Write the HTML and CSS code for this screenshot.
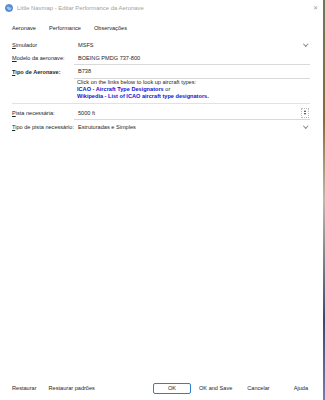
FILE: index.html
```html
<!DOCTYPE html>
<html>
<head>
<meta charset="utf-8">
<link rel="stylesheet" href="styles.css">
</head>
<body>
<div class="window">
  <div class="titlebar">
    <svg class="appicon" width="8" height="8" viewBox="0 0 8 8">
      <circle cx="4" cy="4" r="3.6" fill="#5b8fd6"/>
      <path d="M1.5 3.2 Q3 2 4.2 3 T6.8 3.4 L6 5.6 Q4.5 6.6 3 5.8 Z" fill="#9cc3ee"/>
      <circle cx="4" cy="4" r="3.6" fill="none" stroke="#3a6db5" stroke-width="0.6"/>
    </svg>
    <span class="title">Little Navmap - Editar Performance da Aeronave</span>
    <span class="close">✕</span>
  </div>
  <div class="tabs">
    <span class="tab">Aeronave</span>
    <span class="tab">Performance</span>
    <span class="tab">Observações</span>
  </div>
  <div class="form">
    <div class="row">
      <span class="label"><u>S</u>imulador</span>
      <div class="field combo"><span>MSFS</span><span class="chev"></span></div>
    </div>
    <div class="row">
      <span class="label"><u>M</u>odelo da aeronave:</span>
      <div class="field edit"><span>BOEING PMDG 737-800</span></div>
    </div>
    <div class="row">
      <span class="label bold"><u>T</u>ipo de Aeronave:</span>
      <div class="field edit"><span>B738</span></div>
    </div>
    <div class="help">
      <div>Click on the links below to look up aircraft types:</div>
      <div><span class="link">ICAO - Aircraft Type Designators</span> or</div>
      <div><span class="link">Wikipedia - List of ICAO aircraft type designators.</span></div>
    </div>
    <div class="sep"></div>
    <div class="row">
      <span class="label"><u>P</u>ista necessária:</span>
      <div class="field edit spin"><span>5000 ft</span><span class="spinbtn"><i class="up"></i><i class="down"></i></span></div>
    </div>
    <div class="row">
      <span class="label"><u>T</u>ipo de pista necessário:</span>
      <div class="field combo"><span>Estruturadas e Simples</span><span class="chev"></span></div>
    </div>
  </div>
  <div class="spacer"></div>
  <div class="buttons">
    <span class="btn">Restaurar</span>
    <span class="btn">Restaurar padrões</span>
    <span class="grow"></span>
    <span class="btn ok">OK</span>
    <span class="btn">OK and Save</span>
    <span class="btn">Cancelar</span>
    <span class="btn">Ajuda</span>
  </div>
</div>
</body>
</html>
```
FILE: styles.css
```css
html, body {
  margin: 0;
  padding: 0;
}
body {
  width: 325px;
  height: 400px;
  background: linear-gradient(#6a7a5a, #8a6a3a 30%, #c6b6a8 50%, #3a4a6a 80%, #7a7ab0);
  font-family: "Liberation Sans", Arial, sans-serif;
  font-size: 5.6px;
  color: #262626;
  overflow: hidden;
}
.window {
  width: 323px;
  height: 400px;
  background: #ffffff;
  display: flex;
  flex-direction: column;
}
.titlebar {
  height: 15px;
  display: flex;
  align-items: center;
  padding: 0 0 0 5px;
}
.appicon {
  margin-right: 4px;
}
.title {
  color: #a0a0a0;
  font-size: 5.9px;
  flex: 1;
}
.close {
  color: #a0a0a0;
  font-size: 6px;
  width: 16px;
  text-align: center;
}
.tabs {
  display: flex;
  gap: 13px;
  padding: 0 0 0 12px;
  height: 12px;
  align-items: center;
  margin-top: 7px;
}
.form {
  display: flex;
  flex-direction: column;
  padding: 4px 13px 0 12px;
}
.row {
  display: flex;
  align-items: center;
  height: 13.5px;
}
.label {
  width: 62px;
  flex: none;
  white-space: nowrap;
}
.label.bold {
  font-weight: bold;
}
.field {
  flex: 1;
  height: 100%;
  display: flex;
  align-items: center;
  padding-left: 4px;
  box-sizing: border-box;
}
.edit {
  border-bottom: 1px solid #d9d9d9;
}
.combo {
  justify-content: space-between;
}
.chev {
  width: 2.5px;
  height: 2.5px;
  border-right: 0.7px solid #888;
  border-bottom: 0.7px solid #888;
  transform: rotate(45deg);
  margin-right: 3px;
  margin-top: -1.5px;
}
.spin {
  justify-content: space-between;
}
.spinbtn {
  width: 6px;
  height: 8px;
  border: 0.6px dotted #bbb;
  display: flex;
  flex-direction: column;
  align-items: center;
  justify-content: center;
  gap: 1px;
  margin-right: 1px;
}
.spinbtn i {
  width: 0;
  height: 0;
  border-left: 1.5px solid transparent;
  border-right: 1.5px solid transparent;
}
.spinbtn .up {
  border-bottom: 2px solid #333;
}
.spinbtn .down {
  border-top: 2px solid #333;
}
.help {
  padding: 0 0 0 65px;
  line-height: 7px;
}
.link {
  color: #1212d6;
  font-weight: bold;
}
.sep {
  height: 1px;
  background: #e2e2e2;
  margin: 3px 0 3px 0;
}
.spacer {
  flex: 1;
}
.buttons {
  display: flex;
  align-items: center;
  height: 12px;
  padding: 0 15px 6px 12px;
}
.btn {
  margin-right: 12px;
}
.grow {
  flex: 1;
}
.ok {
  width: 36px;
  height: 9px;
  border: 1px solid #2f7fd0;
  border-radius: 2px;
  display: flex;
  align-items: center;
  justify-content: center;
  margin-right: 8px;
}
.buttons .btn:last-child {
  margin-right: 0;
}
.buttons .btn:nth-child(5) {
  margin-right: 15px;
}
.buttons .btn:nth-child(6) {
  margin-right: 24px;
}
```
